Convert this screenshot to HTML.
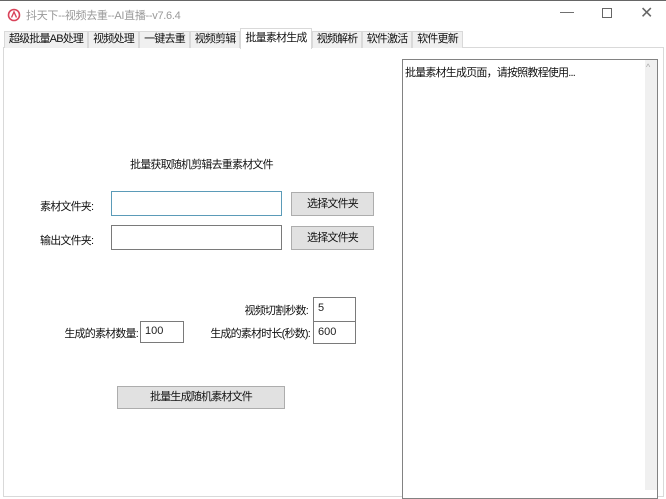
<!DOCTYPE html>
<html><head><meta charset="utf-8"><style>
*{box-sizing:border-box;margin:0;padding:0}
body{width:666px;height:490px;background:#fff;position:relative;overflow:hidden;font-family:"Liberation Sans","Noto Sans CJK SC",sans-serif;font-size:11px;letter-spacing:-0.8px;color:#222}
.a{position:absolute}
.tab{position:absolute;top:31px;height:17px;background:#f0f0f0;border:1px solid #d9d9d9;border-bottom:none;line-height:15px;text-align:center;color:#111;white-space:nowrap;overflow:hidden}
.inp{position:absolute;background:#fff;border:1px solid #7a7a7a;letter-spacing:0;padding-left:4px}
.btn{position:absolute;background:#e1e1e1;border:1px solid #adadad;text-align:center;color:#111;white-space:nowrap}
.lbl{position:absolute;white-space:nowrap;color:#111}
.r{text-align:right}
</style></head><body>
<div class="a" style="left:0;top:0;width:666px;height:1px;background:#666"></div>
<svg class="a" style="left:7px;top:8px" width="14" height="14" viewBox="0 0 14 14"><circle cx="7" cy="7" r="5.5" fill="none" stroke="#d9435a" stroke-width="1.6"/><path d="M4.5 9.5 L7 4 L9.5 9.5" fill="none" stroke="#d9435a" stroke-width="1.4"/></svg>
<div class="lbl" style="left:26px;top:7px;color:#999;letter-spacing:-0.3px">抖天下--视频去重--AI直播--v7.6.4</div>
<div class="lbl" style="left:560px;top:3px;color:#666;font-size:14px">—</div>
<div class="a" style="left:602px;top:8px;width:10px;height:10px;border:1px solid #666"></div>
<div class="lbl" style="left:640px;top:3px;color:#666;font-size:16px">✕</div>
<div class="a" style="left:3px;top:47px;width:661px;height:450px;border:1px solid #d9d9d9;background:#fff"></div>
<div class="tab" style="left:4px;width:84px">超级批量AB处理</div>
<div class="tab" style="left:88px;width:51px">视频处理</div>
<div class="tab" style="left:139px;width:51px">一键去重</div>
<div class="tab" style="left:190px;width:50px">视频剪辑</div>
<div class="tab" style="left:240px;top:28px;height:21px;width:72px;background:#fff;line-height:18px">批量素材生成</div>
<div class="tab" style="left:312px;width:50px">视频解析</div>
<div class="tab" style="left:362px;width:50px">软件激活</div>
<div class="tab" style="left:412px;width:51px">软件更新</div>
<div class="a" style="left:402px;top:59px;width:256px;height:440px;border:1px solid #828282;background:#fff"></div>
<div class="a" style="left:645px;top:60px;width:12px;height:430px;background:#f0f0f0"></div>
<div class="lbl" style="left:646px;top:62px;color:#aaa;font-size:9px">^</div>
<div class="lbl" style="left:405px;top:64px">批量素材生成页面，请按照教程使用...</div>
<div class="lbl" style="left:130px;top:156px">批量获取随机剪辑去重素材文件</div>
<div class="lbl" style="left:40px;top:198px">素材文件夹:</div>
<div class="inp" style="left:111px;top:191px;width:171px;height:25px;border-color:#5b9bb8"></div>
<div class="btn" style="left:291px;top:192px;width:83px;height:24px;line-height:22px">选择文件夹</div>
<div class="lbl" style="left:40px;top:232px">输出文件夹:</div>
<div class="inp" style="left:111px;top:225px;width:171px;height:25px"></div>
<div class="btn" style="left:291px;top:226px;width:83px;height:24px;line-height:22px">选择文件夹</div>
<div class="lbl r" style="left:200px;width:108px;top:302px">视频切割秒数:</div>
<div class="inp" style="left:313px;top:297px;width:43px;height:25px;line-height:21px">5</div>
<div class="lbl r" style="left:40px;width:98px;top:325px">生成的素材数量:</div>
<div class="inp" style="left:140px;top:321px;width:44px;height:22px;line-height:19px">100</div>
<div class="lbl r" style="left:190px;width:120px;top:325px">生成的素材时长(秒数):</div>
<div class="inp" style="left:313px;top:321px;width:43px;height:23px;line-height:20px">600</div>
<div class="btn" style="left:117px;top:386px;width:168px;height:23px;line-height:21px">批量生成随机素材文件</div>
</body></html>
